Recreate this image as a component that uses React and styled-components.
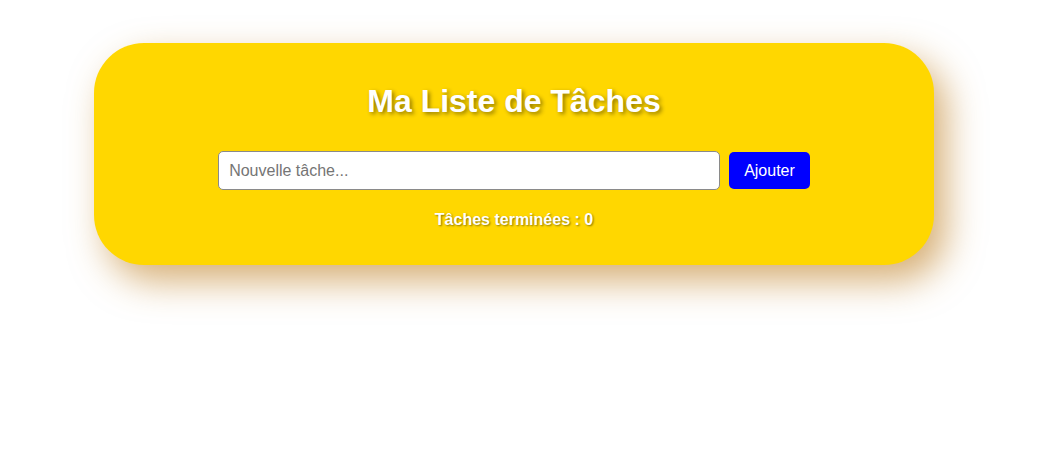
import React, { useState } from 'react'
import styled, { createGlobalStyle } from 'styled-components'

const GlobalStyle = createGlobalStyle`
  body {
    margin: 0;
    background: #ffffff;
    font-family: 'Liberation Sans', Arial, sans-serif;
  }
`

const Page = styled.div`
  box-sizing: border-box;
  min-height: 100vh;
  padding-top: 43px;
`

const Card = styled.div`
  box-sizing: border-box;
  width: 840px;
  margin-left: 94px;
  padding: 20px;
  background: #ffd700;
  border-radius: 50px;
  box-shadow: 12px 16px 36px rgba(190, 128, 36, 0.62);
  text-align: center;
`

const Title = styled.h1`
  margin: 20px 0 31px;
  font-size: 32px;
  font-weight: bold;
  color: #ffffff;
  text-shadow: 2px 2px 4px rgba(0, 0, 0, 0.45);
`

const Row = styled.div`
  display: flex;
  justify-content: center;
  align-items: center;
  gap: 9px;
  margin-bottom: 21px;
`

const Input = styled.input`
  box-sizing: border-box;
  width: 502px;
  height: 39px;
  padding: 10px;
  border: 1px solid #8a8a8a;
  border-radius: 5px;
  font-family: 'Liberation Sans', Arial, sans-serif;
  font-size: 16px;
  color: #222;
  &::placeholder {
    color: #757575;
  }
`

const Button = styled.button`
  height: 37px;
  padding: 10px 15px;
  border: none;
  border-radius: 5px;
  background: #0000ff;
  color: #ffffff;
  font-family: 'Liberation Sans', Arial, sans-serif;
  font-size: 16px;
  line-height: 17px;
  cursor: pointer;
`

const Counter = styled.p`
  margin: 0 0 16px;
  font-size: 16px;
  font-weight: bold;
  color: #ffffff;
  text-shadow: 1px 1px 2px rgba(0, 0, 0, 0.45);
`

export default function App() {
  const [text, setText] = useState('')
  const [done] = useState(0)

  return (
    <Page>
      <GlobalStyle />
      <Card>
        <Title>Ma Liste de Tâches</Title>
        <Row>
          <Input
            type='text'
            placeholder='Nouvelle tâche...'
            value={text}
            onChange={e => setText(e.target.value)}
          />
          <Button>Ajouter</Button>
        </Row>
        <Counter>Tâches terminées : {done}</Counter>
      </Card>
    </Page>
  )
}
